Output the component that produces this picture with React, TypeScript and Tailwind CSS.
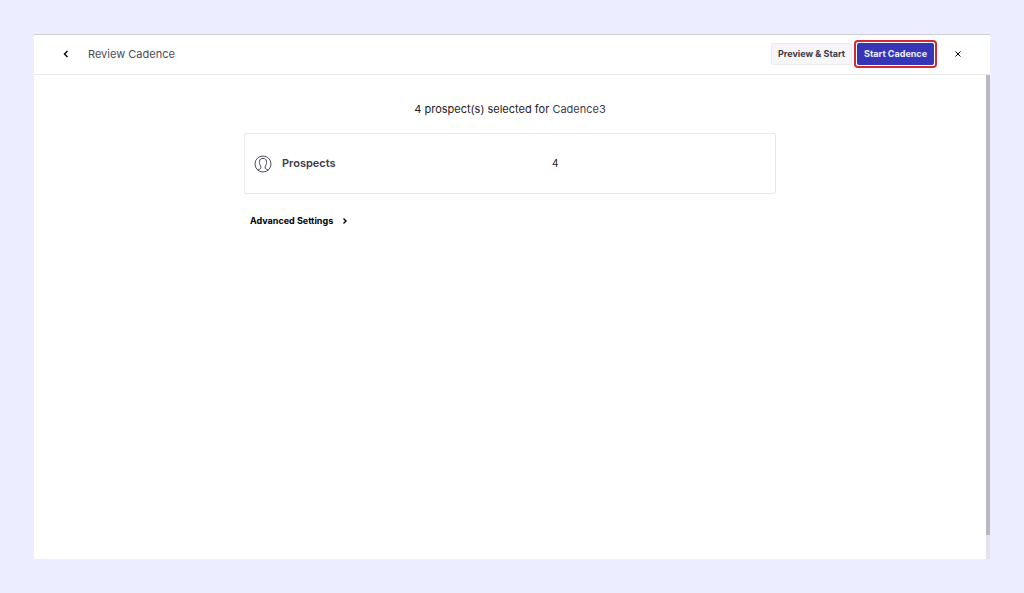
import { useState } from "react";

const cadence = {
  name: "Cadence3",
  prospectCount: 4,
};

function ChevronIcon({ direction }: { direction: "left" | "right" }) {
  return (
    <svg
      viewBox="0 0 8 8"
      className="h-2 w-2"
      fill="none"
      stroke="currentColor"
      strokeWidth="1.4"
      aria-hidden="true"
    >
      <path d={direction === "left" ? "M5.500 1 2.500 4l3 3" : "M2.500 1.500 5 4 2.500 6.500"} />
    </svg>
  );
}

function CloseIcon() {
  return (
    <svg
      viewBox="0 0 8 8"
      className="h-2 w-2"
      fill="none"
      stroke="currentColor"
      strokeWidth="1"
      aria-hidden="true"
    >
      <path d="M1.500 1.500l5 5M6.500 1.500l-5 5" />
    </svg>
  );
}

function ProspectIcon() {
  return (
    <svg
      viewBox="0 0 18 18"
      className="h-[18px] w-[18px] shrink-0"
      fill="none"
      stroke="currentColor"
      strokeWidth="0.9"
      aria-hidden="true"
    >
      <circle cx="9" cy="9" r="8" />
      <path d="M3.600 14.800c1.400-.3 3-.7 3.200-1.600.2-.9 0-1.700-.3-2.300C5.600 9.600 5.300 8 5.500 6.200 5.700 4.300 7 3.400 9 3.400s3.300.9 3.500 2.800c.2 1.800-.1 3.400-1 4.700-.3.600-.5 1.400-.3 2.300.2.900 1.800 1.300 3.200 1.600" />
    </svg>
  );
}

export default function App() {
  const [advancedOpen, setAdvancedOpen] = useState(false);

  return (
    <div className="flex h-screen bg-[#ecedfe] p-[34px] font-['Inter',sans-serif] text-[#1f2024]">
      <div className="flex min-w-0 flex-1 flex-col border-t border-[#cdced9] bg-white">
        <header className="flex h-10 shrink-0 items-center border-b border-[#ebebee] px-6 pb-px">
          <button
            type="button"
            aria-label="Back"
            className="flex h-4 w-4 items-center justify-center text-black"
          >
            <ChevronIcon direction="left" />
          </button>
          <h1 className="ml-3.5 text-[11px] text-[#4b4b57]">Review Cadence</h1>

          <div className="ml-auto flex items-center">
            <button
              type="button"
              className="h-[22px] rounded-xs border border-[#ebebee] bg-[#f6f6f8] px-1.5 text-[9px] font-bold whitespace-nowrap text-[#3c3c48]"
            >
              Preview &amp; Start
            </button>
            <div className="ml-0.5 rounded-sm border-2 border-[#d22a35] p-px">
              <button
                type="button"
                className="block h-[22px] rounded-xs bg-[#3535b5] px-[7px] text-[9px] font-bold whitespace-nowrap text-[#eeeefc]"
              >
                Start Cadence
              </button>
            </div>
            <button
              type="button"
              aria-label="Close"
              className="ml-[13px] flex h-4 w-4 items-center justify-center text-black"
            >
              <CloseIcon />
            </button>
          </div>
        </header>

        <div className="flex min-h-0 flex-1">
          <main className="min-w-0 flex-1 px-4 pt-[26px]">
            <div className="mx-auto max-w-[532px]">
              <p className="text-center text-[11px] leading-4">
                {cadence.prospectCount} prospect(s) selected for{" "}
                <span className="text-[#3c3c48]">{cadence.name}</span>
              </p>

              <section className="mt-4 grid h-[61px] grid-cols-[298px_1fr] items-center rounded-xs border border-[#e8e8eb] px-[9px]">
                <div className="flex items-center gap-2.5 text-[#3c3c48]">
                  <ProspectIcon />
                  <h2 className="text-[11px] font-semibold">Prospects</h2>
                </div>
                <span className="text-[10px]">{cadence.prospectCount}</span>
              </section>

              <button
                type="button"
                aria-expanded={advancedOpen}
                onClick={() => setAdvancedOpen(!advancedOpen)}
                className="mt-[19px] ml-1.5 flex h-4 items-center gap-2 text-[9px] font-bold text-black"
              >
                Advanced Settings
                <ChevronIcon direction="right" />
              </button>
            </div>
          </main>

          <div className="flex w-1 flex-col bg-[#e3e3e8]" aria-hidden="true">
            <div className="h-[95%] bg-[#b9b9be]" />
          </div>
        </div>
      </div>
    </div>
  );
}
